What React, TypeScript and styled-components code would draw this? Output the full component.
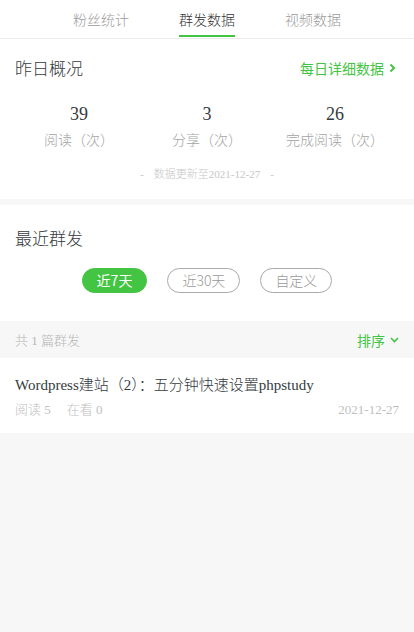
import styled, { createGlobalStyle } from "styled-components";

const GREEN = "#43c443";

const GlobalStyle = createGlobalStyle`
  html, body {
    margin: 0;
    padding: 0;
    background: #f6f7f6;
  }
  body {
    font-family: "Liberation Serif", "Noto Sans CJK SC", serif;
    font-weight: 300;
    color: #353535;
  }
`;

const Page = styled.div`
  width: 414px;
  min-height: 632px;
  background: #f6f7f6;
`;

const Tabs = styled.nav`
  display: flex;
  justify-content: center;
  gap: 50px;
  height: 38px;
  background: #fff;
  border-bottom: 1px solid #ececec;
`;

const Tab = styled.div<{ $active?: boolean }>`
  position: relative;
  display: flex;
  align-items: center;
  font-family: "Noto Sans CJK SC", sans-serif;
  font-size: 14px;
  color: ${(p) => (p.$active ? "#353535" : "#9a9a9a")};

  &::after {
    content: "";
    display: ${(p) => (p.$active ? "block" : "none")};
    position: absolute;
    left: 0;
    right: 0;
    bottom: 1px;
    height: 2px;
    background: ${GREEN};
  }
`;

const Card = styled.section<{ $gap?: number }>`
  background: #fff;
  padding: 0 15px;
  margin-bottom: ${(p) => p.$gap ?? 0}px;
`;

const CardHeader = styled.header<{ $top: number }>`
  display: flex;
  justify-content: space-between;
  align-items: center;
  padding-top: ${(p) => p.$top}px;
  padding-right: 3px;
  line-height: 22px;
`;

const Title = styled.h2`
  margin: 0;
  font-family: "Noto Sans CJK SC", sans-serif;
  font-weight: 300;
  font-size: 17px;
  color: #353a40;
`;

const GreenLink = styled.a`
  display: flex;
  align-items: center;
  gap: 5px;
  font-family: "Noto Sans CJK SC", sans-serif;
  font-weight: 400;
  font-size: 14px;
  color: ${GREEN};
  text-decoration: none;
`;

const Stats = styled.div`
  display: grid;
  grid-template-columns: repeat(3, 1fr);
  margin-top: 23px;
  text-align: center;
`;

const StatValue = styled.div`
  font-size: 18px;
  line-height: 24px;
  color: #353a40;
`;

const StatLabel = styled.div`
  margin-top: 3px;
  font-size: 14px;
  line-height: 20px;
  font-family: "Noto Sans CJK SC", sans-serif;
  color: #a3a3a3;
`;

const UpdateNote = styled.div`
  display: flex;
  justify-content: center;
  gap: 10px;
  margin-top: 17px;
  padding-bottom: 17px;
  font-size: 11px;
  line-height: 16px;
  color: #c6c6c6;
`;

const Ranges = styled.div`
  display: flex;
  justify-content: center;
  gap: 20px;
  margin-top: 19px;
  padding-bottom: 28px;
`;

const RangeButton = styled.button<{ $active?: boolean }>`
  height: 25px;
  padding: 0 14px;
  border-radius: 13px;
  border: 1px solid ${(p) => (p.$active ? GREEN : "#aaaaaa")};
  background: ${(p) => (p.$active ? GREEN : "#fff")};
  color: ${(p) => (p.$active ? "#fff" : "#9a9a9a")};
  font-family: "Noto Sans CJK SC", sans-serif;
  font-weight: ${(p) => (p.$active ? 400 : 300)};
  font-size: 14px;
  line-height: 23px;
`;

const ListBar = styled.div`
  display: flex;
  justify-content: space-between;
  align-items: center;
  height: 37px;
  padding: 0 15px;
  font-size: 13px;
  color: #b8b8b8;
`;

const Article = styled.article`
  background: #fff;
  padding: 16px 15px 14px;
`;

const ArticleTitle = styled.div`
  font-size: 15px;
  line-height: 22px;
  color: #353a40;
`;

const Meta = styled.div`
  display: flex;
  justify-content: space-between;
  margin-top: 5px;
  font-size: 13px;
  line-height: 18px;
  color: #c0c0c0;
`;

const MetaLeft = styled.div`
  display: flex;
  gap: 16px;
`;

const ChevronRight = () => (
  <svg width="7" height="12" viewBox="0 0 7 12">
    <path d="M1.5 2.5l3.5 3.5-3.5 3.5" fill="none" stroke={GREEN} strokeWidth="2" />
  </svg>
);

const ChevronDown = () => (
  <svg width="9" height="6" viewBox="0 0 9 6">
    <path d="M1 1l3.5 3.5L8 1" fill="none" stroke={GREEN} strokeWidth="1.6" />
  </svg>
);

const stats = [
  { value: "39", label: "阅读（次）" },
  { value: "3", label: "分享（次）" },
  { value: "26", label: "完成阅读（次）" },
];

export default function App() {
  return (
    <Page>
      <GlobalStyle />
      <Tabs>
        <Tab>粉丝统计</Tab>
        <Tab $active>群发数据</Tab>
        <Tab>视频数据</Tab>
      </Tabs>

      <Card $gap={6}>
        <CardHeader $top={18}>
          <Title>昨日概况</Title>
          <GreenLink>
            每日详细数据
            <ChevronRight />
          </GreenLink>
        </CardHeader>
        <Stats>
          {stats.map((s) => (
            <div key={s.label}>
              <StatValue>{s.value}</StatValue>
              <StatLabel>{s.label}</StatLabel>
            </div>
          ))}
        </Stats>
        <UpdateNote>
          <span>-</span>
          <span>数据更新至2021-12-27</span>
          <span>-</span>
        </UpdateNote>
      </Card>

      <Card>
        <CardHeader $top={22}>
          <Title>最近群发</Title>
        </CardHeader>
        <Ranges>
          <RangeButton $active>近7天</RangeButton>
          <RangeButton>近30天</RangeButton>
          <RangeButton>自定义</RangeButton>
        </Ranges>
      </Card>

      <ListBar>
        <span>共 1 篇群发</span>
        <GreenLink>
          排序
          <ChevronDown />
        </GreenLink>
      </ListBar>

      <Article>
        <ArticleTitle>Wordpress建站（2）：五分钟快速设置phpstudy</ArticleTitle>
        <Meta>
          <MetaLeft>
            <span>阅读 5</span>
            <span>在看 0</span>
          </MetaLeft>
          <span>2021-12-27</span>
        </Meta>
      </Article>
    </Page>
  );
}
